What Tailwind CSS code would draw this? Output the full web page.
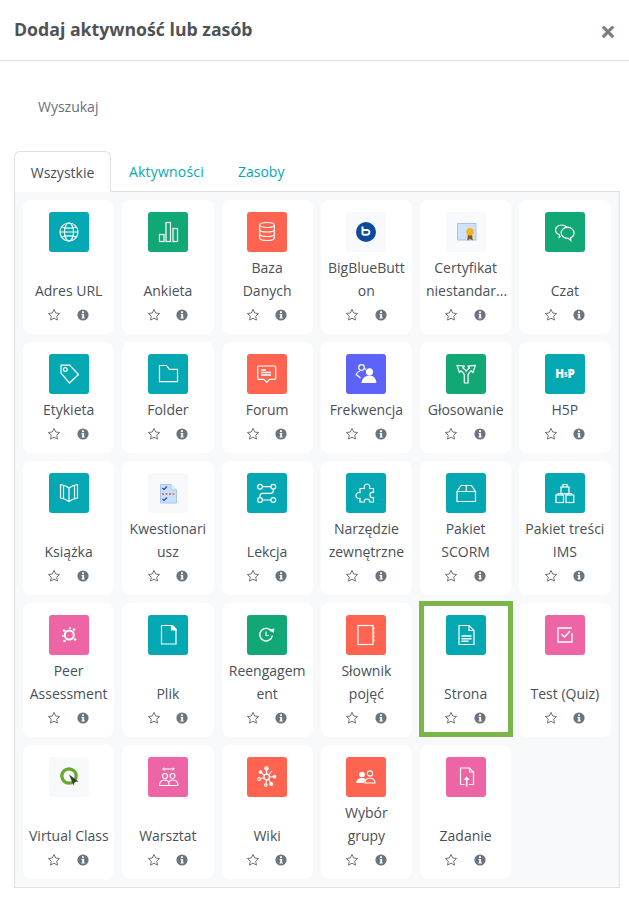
<!DOCTYPE html>
<html lang="pl">
  <head>
    <meta charset="UTF-8" />
    <meta name="viewport" content="width=device-width, initial-scale=1.0" />
    <title>Dodaj aktywność lub zasób</title>
    <script src="https://cdn.jsdelivr.net/npm/@tailwindcss/browser@4"></script>
  </head>
  <body class="bg-white font-['Open_Sans',sans-serif] text-[#495057]">
    <svg class="hidden">
      <symbol id="star" viewBox="0 0 14 14">
        <path d="M7 1.4l1.7 3.6 3.9.5-2.9 2.7.8 3.9L7 10.2l-3.5 1.9.8-3.9-2.9-2.7 3.9-.5z" fill="none" stroke="#6c757d" stroke-width="1" stroke-linejoin="round" />
      </symbol>
      <symbol id="info" viewBox="0 0 12 12">
        <circle cx="6" cy="6" r="5.6" fill="#6c757d" />
        <rect x="5" y="2.3" width="2" height="1.8" fill="#fff" />
        <path d="M4.6 5h2.5v3.4h.6v1H4.5v-1h.7V6h-.6z" fill="#fff" />
      </symbol>
    </svg>

    <div class="h-[61px] px-[14px] flex items-center justify-between border-b border-[#dee2e6]">
      <h1 class="text-[17.7px] font-bold leading-none text-[#4f5356]">Dodaj aktywność lub zasób</h1>
      <span class="text-[28px] font-bold leading-none text-[#7a7c7e] -mr-px mt-[2px]">×</span>
    </div>

    <div class="h-[90px] pl-[38px] pt-[36px] text-[14px] leading-[20px] text-[#6a7178]">Wyszukaj</div>

    <div class="pl-[14px] pr-[9px]">
      <div class="flex h-[41px] text-[14px] text-[#05a8b5]">
        <div class="relative z-10 h-[41px] w-[97px] flex items-center justify-center bg-white border border-b-0 border-[#dee2e6] rounded-t-[6px] text-[#495057]">Wszystkie</div>
        <div class="ml-[2px] px-4 flex items-center tracking-[0.2px]">Aktywności</div>
        <div class="pl-[18px] flex items-center">Zasoby</div>
      </div>

      <div class="-mt-px border border-[#dee2e6] bg-[#f8f9fa] pl-2 pr-[8.5px] py-2 grid grid-cols-6 gap-2 text-[14px] leading-[23px] text-center">

        <div class="bg-white rounded-[8px] pt-3 flex flex-col items-center">
          <div class="w-10 h-10 rounded-[3px] bg-[#04a8b3]">
            <svg viewBox="0 0 40 40" class="w-10 h-10" fill="none" stroke="#fff" stroke-width="1.2"><circle cx="20" cy="20" r="9" /><ellipse cx="20" cy="20" rx="4.5" ry="9" /><path d="M12.5 15c4 1.3 11 1.3 15 0M12.5 25c4-1.3 11-1.3 15 0M11 20h18" /></svg>
          </div>
          <div class="flex-1 mt-1 w-full px-[6px] flex flex-col justify-end break-words">Adres URL</div>
          <div class="h-8 flex gap-[15.5px] pt-[6px] pr-px"><svg class="w-[14px] h-[14px]"><use href="#star" /></svg><svg class="w-3 h-3 mt-px"><use href="#info" /></svg></div>
        </div>

        <div class="bg-white rounded-[8px] pt-3 flex flex-col items-center">
          <div class="w-10 h-10 rounded-[3px] bg-[#12a875]">
            <svg viewBox="0 0 40 40" class="w-10 h-10" fill="none" stroke="#fff" stroke-width="1.2"><rect x="11.5" y="22.5" width="4.5" height="7" /><rect x="18" y="10.5" width="4.5" height="19" /><rect x="25" y="16.5" width="4.5" height="13" /></svg>
          </div>
          <div class="flex-1 mt-1 w-full px-[6px] flex flex-col justify-end break-words">Ankieta</div>
          <div class="h-8 flex gap-[15.5px] pt-[6px] pr-px"><svg class="w-[14px] h-[14px]"><use href="#star" /></svg><svg class="w-3 h-3 mt-px"><use href="#info" /></svg></div>
        </div>

        <div class="bg-white rounded-[8px] pt-3 flex flex-col items-center">
          <div class="w-10 h-10 rounded-[3px] bg-[#fe644f]">
            <svg viewBox="0 0 40 40" class="w-10 h-10" fill="none" stroke="#fff" stroke-width="1.2"><ellipse cx="20" cy="13" rx="7.3" ry="2.5" /><path d="M12.7 13v13c0 1.4 3.3 2.5 7.3 2.5s7.3-1.1 7.3-2.5V13M12.7 17.5c0 1.4 3.3 2.5 7.3 2.5s7.3-1.1 7.3-2.5M12.7 22c0 1.4 3.3 2.5 7.3 2.5s7.3-1.1 7.3-2.5" /></svg>
          </div>
          <div class="flex-1 mt-1 w-full px-[6px] flex flex-col justify-end break-words">Baza Danych</div>
          <div class="h-8 flex gap-[15.5px] pt-[6px] pr-px"><svg class="w-[14px] h-[14px]"><use href="#star" /></svg><svg class="w-3 h-3 mt-px"><use href="#info" /></svg></div>
        </div>

        <div class="bg-white rounded-[8px] pt-3 flex flex-col items-center">
          <div class="w-10 h-10 rounded-[3px] bg-[#f8f9fa]">
            <svg viewBox="0 0 40 40" class="w-10 h-10" fill="none"><circle cx="20" cy="20" r="10" fill="#0d4a9b" /><path d="M16.5 14.5v8.2M16.8 18h4.4a2.2 2.2 0 0 1 2.2 2.3 2.4 2.4 0 0 1-2.4 2.4h-4.2" stroke="#fff" stroke-width="2" /></svg>
          </div>
          <div class="flex-1 mt-1 w-full px-[6px] flex flex-col justify-end break-words">BigBlueButton</div>
          <div class="h-8 flex gap-[15.5px] pt-[6px] pr-px"><svg class="w-[14px] h-[14px]"><use href="#star" /></svg><svg class="w-3 h-3 mt-px"><use href="#info" /></svg></div>
        </div>

        <div class="bg-white rounded-[8px] pt-3 flex flex-col items-center">
          <div class="w-10 h-10 rounded-[3px] bg-[#f8f9fa]">
            <svg viewBox="0 0 40 40" class="w-10 h-10"><rect x="11.5" y="11.5" width="18.5" height="16.5" fill="#cfe2fb" stroke="#a3c4f3" /><path d="M22 22l-.8 6.5 2.8-1.5 2.8 1.5-.8-6.5z" fill="#8a5a1c" /><circle cx="24" cy="19.7" r="3.8" fill="#f7b21f" /></svg>
          </div>
          <div class="flex-1 mt-1 w-full px-[6px] flex flex-col justify-end break-words">Certyfikat <span class="block whitespace-nowrap">niestandar...</span></div>
          <div class="h-8 flex gap-[15.5px] pt-[6px] pr-px"><svg class="w-[14px] h-[14px]"><use href="#star" /></svg><svg class="w-3 h-3 mt-px"><use href="#info" /></svg></div>
        </div>

        <div class="bg-white rounded-[8px] pt-3 flex flex-col items-center">
          <div class="w-10 h-10 rounded-[3px] bg-[#12a875]">
            <svg viewBox="0 0 40 40" class="w-10 h-10" fill="none" stroke="#fff" stroke-width="1.2"><path d="M15.5 24l-1.2 1.4.1-2.7c-2.2-.8-3.9-2.6-3.9-4.7 0-2.9 2.8-5 6-5 2.5 0 4.6 1.1 5.6 3" /><path d="M22.5 15.2c3.5 0 6.5 2.6 6.5 5.7 0 2.2-1.4 4-3.4 4.9l.3 3-2.6-2.4c-.3 0-.5 0-.8 0-3.5 0-6.3-2.4-6.3-5.5s2.8-5.7 6.3-5.7z" /></svg>
          </div>
          <div class="flex-1 mt-1 w-full px-[6px] flex flex-col justify-end break-words">Czat</div>
          <div class="h-8 flex gap-[15.5px] pt-[6px] pr-px"><svg class="w-[14px] h-[14px]"><use href="#star" /></svg><svg class="w-3 h-3 mt-px"><use href="#info" /></svg></div>
        </div>

        <div class="bg-white rounded-[8px] pt-3 flex flex-col items-center">
          <div class="w-10 h-10 rounded-[3px] bg-[#04a8b3]">
            <svg viewBox="0 0 40 40" class="w-10 h-10" fill="none" stroke="#fff" stroke-width="1.2" stroke-linejoin="round"><path d="M12 11.2h8.5l9 9.3-9 8.5-8.5-9.8z" /><circle cx="16.3" cy="15.5" r="1.9" /></svg>
          </div>
          <div class="flex-1 mt-1 w-full px-[6px] flex flex-col justify-end break-words">Etykieta</div>
          <div class="h-8 flex gap-[15.5px] pt-[6px] pr-px"><svg class="w-[14px] h-[14px]"><use href="#star" /></svg><svg class="w-3 h-3 mt-px"><use href="#info" /></svg></div>
        </div>

        <div class="bg-white rounded-[8px] pt-3 flex flex-col items-center">
          <div class="w-10 h-10 rounded-[3px] bg-[#04a8b3]">
            <svg viewBox="0 0 40 40" class="w-10 h-10" fill="none" stroke="#fff" stroke-width="1.2"><path d="M11.5 11.5h7l3 3.8h8v12.3h-18z" /></svg>
          </div>
          <div class="flex-1 mt-1 w-full px-[6px] flex flex-col justify-end break-words">Folder</div>
          <div class="h-8 flex gap-[15.5px] pt-[6px] pr-px"><svg class="w-[14px] h-[14px]"><use href="#star" /></svg><svg class="w-3 h-3 mt-px"><use href="#info" /></svg></div>
        </div>

        <div class="bg-white rounded-[8px] pt-3 flex flex-col items-center">
          <div class="w-10 h-10 rounded-[3px] bg-[#fe644f]">
            <svg viewBox="0 0 40 40" class="w-10 h-10" fill="none" stroke="#fff" stroke-width="1.2"><path d="M12 12h15.5a1.2 1.2 0 0 1 1.2 1.2v11a1.2 1.2 0 0 1-1.2 1.2h-5l-2.8 3-2.8-3h-5a1.2 1.2 0 0 1-1.2-1.2v-11a1.2 1.2 0 0 1 1.2-1.2z" /><path d="M14 16h5M14 18.5h10M14 21h10" stroke-width="1.4" /></svg>
          </div>
          <div class="flex-1 mt-1 w-full px-[6px] flex flex-col justify-end break-words">Forum</div>
          <div class="h-8 flex gap-[15.5px] pt-[6px] pr-px"><svg class="w-[14px] h-[14px]"><use href="#star" /></svg><svg class="w-3 h-3 mt-px"><use href="#info" /></svg></div>
        </div>

        <div class="bg-white rounded-[8px] pt-3 flex flex-col items-center">
          <div class="w-10 h-10 rounded-[3px] bg-[#5d63f6]">
            <svg viewBox="0 0 40 40" class="w-10 h-10" fill="none" stroke="#fff" stroke-width="1.2"><circle cx="15.5" cy="13.5" r="2.8" /><path d="M14 17c-2 .5-3.300 1.800-3.800 3.500l4.300 3.500M18.500 14.500l1.500 1" /><circle cx="23.5" cy="17.8" r="3.6" fill="#fff" stroke="none" /><path d="M15.5 29c0-4.500 4-7.500 8-7.500s6.800 3 6.800 7.500z" fill="#fff" stroke="none" /></svg>
          </div>
          <div class="flex-1 mt-1 w-full px-[6px] flex flex-col justify-end break-words">Frekwencja</div>
          <div class="h-8 flex gap-[15.5px] pt-[6px] pr-px"><svg class="w-[14px] h-[14px]"><use href="#star" /></svg><svg class="w-3 h-3 mt-px"><use href="#info" /></svg></div>
        </div>

        <div class="bg-white rounded-[8px] pt-3 flex flex-col items-center">
          <div class="w-10 h-10 rounded-[3px] bg-[#12a875]">
            <svg viewBox="0 0 40 40" class="w-10 h-10" fill="none" stroke="#fff" stroke-width="1.2" stroke-linejoin="round"><path d="M18.3 29v-8c0-1.500-1.500-3-3.300-4.300l-1.500 2L11 11.300l7.500.8-1.600 1.900c1.600 1 2.700 2 3.300 3.200.6-1.200 1.700-2.200 3.300-3.200l-1.600-1.900 7.500-.8-2.500 7.400-1.500-2c-1.800 1.300-3.300 2.800-3.300 4.300v8z" /></svg>
          </div>
          <div class="flex-1 mt-1 w-full px-[6px] flex flex-col justify-end break-words">Głosowanie</div>
          <div class="h-8 flex gap-[15.5px] pt-[6px] pr-px"><svg class="w-[14px] h-[14px]"><use href="#star" /></svg><svg class="w-3 h-3 mt-px"><use href="#info" /></svg></div>
        </div>

        <div class="bg-white rounded-[8px] pt-3 flex flex-col items-center">
          <div class="w-10 h-10 rounded-[3px] bg-[#04a8b3]">
            <svg viewBox="0 0 40 40" class="w-10 h-10"><text x="20" y="23.5" text-anchor="middle" font-size="11.5" font-weight="800" fill="#fff" font-family="Open Sans">H<tspan font-size="6" dy="-1">5</tspan><tspan dy="1">P</tspan></text></svg>
          </div>
          <div class="flex-1 mt-1 w-full px-[6px] flex flex-col justify-end break-words">H5P</div>
          <div class="h-8 flex gap-[15.5px] pt-[6px] pr-px"><svg class="w-[14px] h-[14px]"><use href="#star" /></svg><svg class="w-3 h-3 mt-px"><use href="#info" /></svg></div>
        </div>

        <div class="bg-white rounded-[8px] pt-3 flex flex-col items-center">
          <div class="w-10 h-10 rounded-[3px] bg-[#04a8b3]">
            <svg viewBox="0 0 40 40" class="w-10 h-10" fill="none" stroke="#fff" stroke-width="1.2" stroke-linejoin="round"><path d="M20 15c-2.500-2-5-3-8.500-3.500V25c3.500.5 6 1.500 8.500 3.500 2.500-2 5-3 8.500-3.500V11.500C25 12 22.500 13 20 15zM20 15v13.500M14.500 11.800v13.500M25.500 11.800v13.500" /></svg>
          </div>
          <div class="flex-1 mt-1 w-full px-[6px] flex flex-col justify-end break-words">Książka</div>
          <div class="h-8 flex gap-[15.5px] pt-[6px] pr-px"><svg class="w-[14px] h-[14px]"><use href="#star" /></svg><svg class="w-3 h-3 mt-px"><use href="#info" /></svg></div>
        </div>

        <div class="bg-white rounded-[8px] pt-3 flex flex-col items-center">
          <div class="w-10 h-10 rounded-[3px] bg-[#f8f9fa]">
            <svg viewBox="0 0 40 40" class="w-10 h-10" fill="none"><path d="M12.500 11.500h10.500l5.500 5.500v13H12.500z" fill="#c9e0fa" stroke="#a9c6ee" /><path d="M23 11.500V17h5.500" fill="#e8f2fd" stroke="#a9c6ee" /><path d="M14.500 15l1.500 1.500 3-3M14.500 26l1.500 1.500 3-3" stroke="#2f3fa8" stroke-width="1.2" /><path d="M14 21h13" stroke="#e2555f" stroke-width="1.500" stroke-dasharray="2 1.500" /></svg>
          </div>
          <div class="flex-1 mt-1 w-full px-[6px] flex flex-col justify-end break-words">Kwestionariusz</div>
          <div class="h-8 flex gap-[15.5px] pt-[6px] pr-px"><svg class="w-[14px] h-[14px]"><use href="#star" /></svg><svg class="w-3 h-3 mt-px"><use href="#info" /></svg></div>
        </div>

        <div class="bg-white rounded-[8px] pt-3 flex flex-col items-center">
          <div class="w-10 h-10 rounded-[3px] bg-[#04a8b3]">
            <svg viewBox="0 0 40 40" class="w-10 h-10" fill="none" stroke="#fff" stroke-width="1.2"><circle cx="13" cy="13.700" r="2.400" /><circle cx="26.300" cy="13.700" r="2.400" /><circle cx="13" cy="27" r="2.400" /><circle cx="26.300" cy="27" r="2.400" /><path d="M15.400 13.700h8.500M26.300 16.100v1.600q0 2.600-2.600 2.600h-8q-2.700 0-2.700 2.600v1.700M15.400 27h8.500" /></svg>
          </div>
          <div class="flex-1 mt-1 w-full px-[6px] flex flex-col justify-end break-words">Lekcja</div>
          <div class="h-8 flex gap-[15.5px] pt-[6px] pr-px"><svg class="w-[14px] h-[14px]"><use href="#star" /></svg><svg class="w-3 h-3 mt-px"><use href="#info" /></svg></div>
        </div>

        <div class="bg-white rounded-[8px] pt-3 flex flex-col items-center">
          <div class="w-10 h-10 rounded-[3px] bg-[#04a8b3]">
            <svg viewBox="0 0 40 40" class="w-10 h-10" fill="none" stroke="#fff" stroke-width="1.200" stroke-linejoin="round"><path d="M15 15.500h3.500c-.8-2.300.2-4.500 2.500-4.500s3.300 2.200 2.500 4.500h4v4c-.5 0-1-.2-1.500-.2-1.300 0-2 1-2 2.700s.7 2.700 2 2.700c.5 0 1-.2 1.500-.2v4.500h-4c.4-2-.5-3-2.500-3s-2.900 1-2.500 3H14v-3.800c-2 .8-4-.2-4-2.700s2-3.500 4-2.700v-4.300z" /></svg>
          </div>
          <div class="flex-1 mt-1 w-full px-[6px] flex flex-col justify-end break-words">Narzędzie zewnętrzne</div>
          <div class="h-8 flex gap-[15.5px] pt-[6px] pr-px"><svg class="w-[14px] h-[14px]"><use href="#star" /></svg><svg class="w-3 h-3 mt-px"><use href="#info" /></svg></div>
        </div>

        <div class="bg-white rounded-[8px] pt-3 flex flex-col items-center">
          <div class="w-10 h-10 rounded-[3px] bg-[#04a8b3]">
            <svg viewBox="0 0 40 40" class="w-10 h-10" fill="none" stroke="#fff" stroke-width="1.200" stroke-linejoin="round"><path d="M15 12.500h10.500l4 6v10h-18.500v-10zM11 18.500h18.500M20.300 12.500v6" /></svg>
          </div>
          <div class="flex-1 mt-1 w-full px-[6px] flex flex-col justify-end break-words">Pakiet SCORM</div>
          <div class="h-8 flex gap-[15.5px] pt-[6px] pr-px"><svg class="w-[14px] h-[14px]"><use href="#star" /></svg><svg class="w-3 h-3 mt-px"><use href="#info" /></svg></div>
        </div>

        <div class="bg-white rounded-[8px] pt-3 flex flex-col items-center">
          <div class="w-10 h-10 rounded-[3px] bg-[#04a8b3]">
            <svg viewBox="0 0 40 40" class="w-10 h-10" fill="none" stroke="#fff" stroke-width="1.200"><rect x="16" y="14" width="8" height="6.800" /><path d="M18 14v-2.500h4V14" /><rect x="11" y="22" width="7.500" height="7.500" /><path d="M13 22v-1.500h3.500V22" /><rect x="21" y="22" width="7.800" height="7.500" /><path d="M23 22v-1.500h3.500V22" /></svg>
          </div>
          <div class="flex-1 mt-1 w-full px-[6px] flex flex-col justify-end break-words"><span class="block -mx-1 whitespace-nowrap">Pakiet treści</span>IMS</div>
          <div class="h-8 flex gap-[15.5px] pt-[6px] pr-px"><svg class="w-[14px] h-[14px]"><use href="#star" /></svg><svg class="w-3 h-3 mt-px"><use href="#info" /></svg></div>
        </div>

        <div class="bg-white rounded-[8px] pt-3 flex flex-col items-center">
          <div class="w-10 h-10 rounded-[3px] bg-[#ee65a5]">
            <svg viewBox="0 0 40 40" class="w-10 h-10" fill="#fff"><circle cx="20.300" cy="20" r="4.500" fill="none" stroke="#fff" stroke-width="2" /><circle cx="15" cy="15.500" r="1.300" /><circle cx="25" cy="14.500" r="1.300" /><circle cx="26" cy="24.500" r="1.300" /><circle cx="15.500" cy="26" r="1.300" /><circle cx="21" cy="13" r="1" /><circle cx="14" cy="21" r="1" /></svg>
          </div>
          <div class="flex-1 mt-1 w-full px-[6px] flex flex-col justify-end break-words">Peer Assessment</div>
          <div class="h-8 flex gap-[15.5px] pt-[6px] pr-px"><svg class="w-[14px] h-[14px]"><use href="#star" /></svg><svg class="w-3 h-3 mt-px"><use href="#info" /></svg></div>
        </div>

        <div class="bg-white rounded-[8px] pt-3 flex flex-col items-center">
          <div class="w-10 h-10 rounded-[3px] bg-[#04a8b3]">
            <svg viewBox="0 0 40 40" class="w-10 h-10" fill="none" stroke="#fff" stroke-width="1.200"><path d="M13.500 10.500h10l4.500 4.500v14H13.500z" /><path d="M23.500 10.500h1l3.500 3.500v1h-4.500z" fill="#fff" /></svg>
          </div>
          <div class="flex-1 mt-1 w-full px-[6px] flex flex-col justify-end break-words">Plik</div>
          <div class="h-8 flex gap-[15.5px] pt-[6px] pr-px"><svg class="w-[14px] h-[14px]"><use href="#star" /></svg><svg class="w-3 h-3 mt-px"><use href="#info" /></svg></div>
        </div>

        <div class="bg-white rounded-[8px] pt-3 flex flex-col items-center">
          <div class="w-10 h-10 rounded-[3px] bg-[#12a875]">
            <svg viewBox="0 0 40 40" class="w-10 h-10" fill="none" stroke="#fff" stroke-width="1.400"><path d="M24.500 16.500a6.300 6.300 0 1 0 .8 4" /><path d="M19 16.500v4h3" stroke-width="1.100" /><path d="M22.500 14.500l5-1-1 4.500z" fill="#fff" stroke="none" /></svg>
          </div>
          <div class="flex-1 mt-1 w-full px-[6px] flex flex-col justify-end break-words">Reengagement</div>
          <div class="h-8 flex gap-[15.5px] pt-[6px] pr-px"><svg class="w-[14px] h-[14px]"><use href="#star" /></svg><svg class="w-3 h-3 mt-px"><use href="#info" /></svg></div>
        </div>

        <div class="bg-white rounded-[8px] pt-3 flex flex-col items-center">
          <div class="w-10 h-10 rounded-[3px] bg-[#fe644f]">
            <svg viewBox="0 0 40 40" class="w-10 h-10" fill="none" stroke="#fff" stroke-width="1.200"><rect x="12" y="10.500" width="15" height="19" /><path d="M27 13.500h1.500M27 17.500h1.500M27 21.500h1.500M27 25.500h1.500" stroke-width="2" /></svg>
          </div>
          <div class="flex-1 mt-1 w-full px-[6px] flex flex-col justify-end break-words">Słownik pojęć</div>
          <div class="h-8 flex gap-[15.5px] pt-[6px] pr-px"><svg class="w-[14px] h-[14px]"><use href="#star" /></svg><svg class="w-3 h-3 mt-px"><use href="#info" /></svg></div>
        </div>

        <div class="relative bg-white pt-3 flex flex-col items-center">
          <div class="absolute -left-px -right-[1.75px] -top-[2px] bottom-0 border-[5px] border-[#7ab648] pointer-events-none"></div>
          <div class="w-10 h-10 rounded-[3px] bg-[#04a8b3]">
            <svg viewBox="0 0 40 40" class="w-10 h-10" fill="none" stroke="#fff" stroke-width="1.200"><path d="M13 10.500h10l5 5V29.500H13z" /><path d="M23 10.500v5h5" /><path d="M15.500 21h10M15.500 23.700h10M15.500 26.300h7" stroke-width="1.400" /></svg>
          </div>
          <div class="flex-1 mt-1 w-full px-[6px] flex flex-col justify-end break-words">Strona</div>
          <div class="h-8 flex gap-[15.5px] pt-[6px] pr-px"><svg class="w-[14px] h-[14px]"><use href="#star" /></svg><svg class="w-3 h-3 mt-px"><use href="#info" /></svg></div>
        </div>

        <div class="bg-white rounded-[8px] pt-3 flex flex-col items-center">
          <div class="w-10 h-10 rounded-[3px] bg-[#ee65a5]">
            <svg viewBox="0 0 40 40" class="w-10 h-10" fill="none" stroke="#fff" stroke-width="1.300"><path d="M27 13h-14v14h14v-9" /><path d="M16.500 19l3 3 5.500-6" stroke-width="1.500" /></svg>
          </div>
          <div class="flex-1 mt-1 w-full px-[6px] flex flex-col justify-end break-words">Test (Quiz)</div>
          <div class="h-8 flex gap-[15.5px] pt-[6px] pr-px"><svg class="w-[14px] h-[14px]"><use href="#star" /></svg><svg class="w-3 h-3 mt-px"><use href="#info" /></svg></div>
        </div>

        <div class="bg-white rounded-[8px] pt-3 flex flex-col items-center">
          <div class="w-10 h-10 rounded-[3px] bg-[#f8f9fa]">
            <svg viewBox="0 0 40 40" class="w-10 h-10" fill="none"><circle cx="20" cy="19" r="7.200" stroke="#6aa82b" stroke-width="3.300" /><path d="M20 17.500l9.500 7-4 .5-.8 3.500z" fill="#3a3d3a" /></svg>
          </div>
          <div class="flex-1 mt-1 w-full px-[6px] flex flex-col justify-end whitespace-nowrap">Virtual Class</div>
          <div class="h-8 flex gap-[15.5px] pt-[6px] pr-px"><svg class="w-[14px] h-[14px]"><use href="#star" /></svg><svg class="w-3 h-3 mt-px"><use href="#info" /></svg></div>
        </div>

        <div class="bg-white rounded-[8px] pt-3 flex flex-col items-center">
          <div class="w-10 h-10 rounded-[3px] bg-[#ee65a5]">
            <svg viewBox="0 0 40 40" class="w-10 h-10" fill="none" stroke="#fff" stroke-width="1.100"><path d="M15 12h10.500" /><path d="M14 12l2.500-1.800v3.600zM27 12l-2.500-1.800v3.600z" fill="#fff" stroke="none" /><circle cx="17" cy="19" r="2.500" /><circle cx="24.500" cy="19" r="2.500" /><path d="M11.500 28.500c0-3.500 2-5.500 5.500-5.500 2 0 3 .8 3.800 1.800.8-1 1.800-1.800 3.700-1.800 3.500 0 5.500 2 5.500 5.500zM20.800 24.800v3.700" /></svg>
          </div>
          <div class="flex-1 mt-1 w-full px-[6px] flex flex-col justify-end break-words">Warsztat</div>
          <div class="h-8 flex gap-[15.5px] pt-[6px] pr-px"><svg class="w-[14px] h-[14px]"><use href="#star" /></svg><svg class="w-3 h-3 mt-px"><use href="#info" /></svg></div>
        </div>

        <div class="bg-white rounded-[8px] pt-3 flex flex-col items-center">
          <div class="w-10 h-10 rounded-[3px] bg-[#fe644f]">
            <svg viewBox="0 0 40 40" class="w-10 h-10" fill="#fff" stroke="#fff" stroke-width="1.100"><path d="M19.700 20L19.500 12M19.700 20L26 19.700M19.700 20L24 26M19.700 20L19 27.500M19.700 20L12.500 22M19.700 20L14 15.500M19.700 20L25 14" /><circle cx="19.700" cy="20" r="2.800" fill="#fe644f" stroke-width="1.300" /><circle cx="19.500" cy="11.500" r="1.700" /><circle cx="27.500" cy="19.700" r="1.300" /><circle cx="24.300" cy="27" r="1.500" /><circle cx="18.800" cy="28" r="1.300" fill="none" /><circle cx="12" cy="22" r="1.500" fill="none" /><circle cx="13.500" cy="15" r="1.300" /></svg>
          </div>
          <div class="flex-1 mt-1 w-full px-[6px] flex flex-col justify-end break-words">Wiki</div>
          <div class="h-8 flex gap-[15.5px] pt-[6px] pr-px"><svg class="w-[14px] h-[14px]"><use href="#star" /></svg><svg class="w-3 h-3 mt-px"><use href="#info" /></svg></div>
        </div>

        <div class="bg-white rounded-[8px] pt-3 flex flex-col items-center">
          <div class="w-10 h-10 rounded-[3px] bg-[#fe644f]">
            <svg viewBox="0 0 40 40" class="w-10 h-10" fill="none" stroke="#fff" stroke-width="1.100"><circle cx="16" cy="17.500" r="2.800" fill="#fff" stroke="none" /><path d="M10.300 26c0-3.200 2.500-5 5.700-5 1.500 0 2.800.4 3.800 1.200-1 .9-1.500 2.200-1.500 3.800z" fill="#fff" stroke="none" /><circle cx="24" cy="16.500" r="2.600" /><path d="M19 26c0-3 2-4.800 5-4.800s5 1.800 5 4.800z" /></svg>
          </div>
          <div class="flex-1 mt-1 w-full px-[6px] flex flex-col justify-end break-words">Wybór grupy</div>
          <div class="h-8 flex gap-[15.5px] pt-[6px] pr-px"><svg class="w-[14px] h-[14px]"><use href="#star" /></svg><svg class="w-3 h-3 mt-px"><use href="#info" /></svg></div>
        </div>

        <div class="bg-white rounded-[8px] pt-3 flex flex-col items-center">
          <div class="w-10 h-10 rounded-[3px] bg-[#ee65a5]">
            <svg viewBox="0 0 40 40" class="w-10 h-10" fill="none" stroke="#fff" stroke-width="1.200"><path d="M18.500 27.500h-4v-16.500h9l4 4v12.500h-4.500" /><path d="M23.500 11v4h4" /><path d="M20.700 29.500v-8" stroke-width="1.500" /><path d="M17.500 23l3.200-3.500 3.200 3.500z" fill="#fff" stroke="none" /></svg>
          </div>
          <div class="flex-1 mt-1 w-full px-[6px] flex flex-col justify-end break-words">Zadanie</div>
          <div class="h-8 flex gap-[15.5px] pt-[6px] pr-px"><svg class="w-[14px] h-[14px]"><use href="#star" /></svg><svg class="w-3 h-3 mt-px"><use href="#info" /></svg></div>
        </div>

      </div>
    </div>
  </body>
</html>
